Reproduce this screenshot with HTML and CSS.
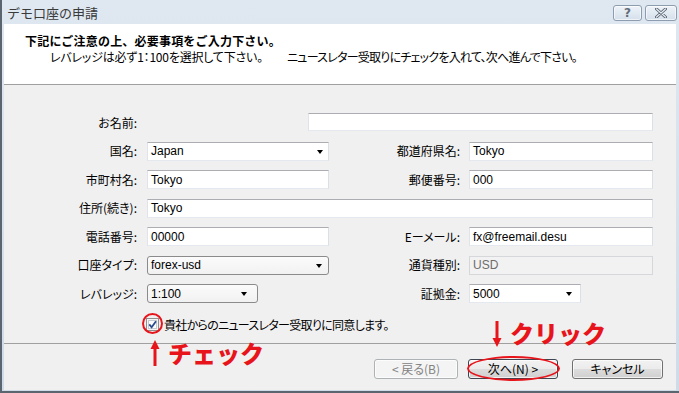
FILE: index.html
```html
<!DOCTYPE html>
<html lang="ja">
<head>
    <meta charset="UTF-8">
    <title>デモ口座の申請</title>
    <link rel="stylesheet" href="styles.css">
</head>
<body>
    <div class="window">
        <div class="titlebar">
            <span class="title">デモ口座の申請</span>
            <div class="caption-btns">
                <span class="cap-btn help">?</span>
                <span class="cap-btn close">
                    <svg width="12" height="10" viewBox="0 0 12 10">
                        <path d="M1.5 1 L10.5 9 M10.5 1 L1.5 9" stroke="#5a6470" stroke-width="3" stroke-linecap="round"/>
                        <path d="M1.5 1 L10.5 9 M10.5 1 L1.5 9" stroke="#e9eef4" stroke-width="1.2" stroke-linecap="round"/>
                    </svg>
                </span>
            </div>
        </div>

        <div class="client">
            <div class="header">
                <p class="header-title">下記にご注意の上、必要事項をご入力下さい。</p>
                <p class="header-sub">
                    <span class="sub-left">レバレッジは必ず1：100を選択して下さい。</span>
                    <span class="sub-right">ニュースレター受取りにチェックを入れて、次へ進んで下さい。</span>
                </p>
            </div>

            <div class="body">
                <div class="form">
                    <label class="lbl">お名前:</label>
                    <div class="field text name"></div>

                    <label class="lbl">国名:</label>
                    <div class="field text combo">Japan<i class="arrow"></i></div>
                    <label class="lbl lbl-r">都道府県名:</label>
                    <div class="field text">Tokyo</div>

                    <label class="lbl">市町村名:</label>
                    <div class="field text">Tokyo</div>
                    <label class="lbl lbl-r">郵便番号:</label>
                    <div class="field text">000</div>

                    <label class="lbl">住所(続き):</label>
                    <div class="field text wide">Tokyo</div>

                    <label class="lbl">電話番号:</label>
                    <div class="field text">00000</div>
                    <label class="lbl lbl-r">Eーメール:</label>
                    <div class="field text">fx@freemail.desu</div>

                    <label class="lbl">口座タイプ:</label>
                    <div class="field list">forex-usd<i class="arrow"></i></div>
                    <label class="lbl lbl-r">通貨種別:</label>
                    <div class="field text disabled">USD</div>

                    <label class="lbl">レバレッジ:</label>
                    <div class="field list short">1:100<i class="arrow"></i></div>
                    <label class="lbl lbl-r">証拠金:</label>
                    <div class="field text combo short">5000<i class="arrow"></i></div>
                </div>

                <div class="agree">
                    <svg class="checkbox" width="13" height="13" viewBox="0 0 13 13">
                        <rect x="0.5" y="0.5" width="12" height="12" fill="#f4f4f4" stroke="#8e8f8f"/>
                        <rect x="2.5" y="2.5" width="8" height="8" fill="#fdfdfd" stroke="#c6cbd2"/>
                        <path d="M3.3 6.4 L5.6 9.2 L10 3.2" fill="none" stroke="#2a4c8f" stroke-width="1.8"/>
                    </svg>
                    <span class="agree-text">貴社からのニュースレター受取りに同意します。</span>
                </div>
            </div>

            <div class="footer">
                <button class="btn disabled back">&lt; 戻る(B)</button>
                <button class="btn default next">次へ(N) &gt;</button>
                <button class="btn cancel">キャンセル</button>
            </div>
        </div>

        <span class="ring ring-check"></span>
        <span class="ring ring-next"></span>

        <div class="note note-check">
            <svg width="10" height="27" viewBox="0 0 10 27">
                <path d="M5 26 V7" stroke="#e8141b" stroke-width="3"/>
                <path d="M0.5 9 L5 0 L9.5 9 Z" fill="#e8141b"/>
            </svg>
            <span>チェック</span>
        </div>
        <div class="note note-click">
            <svg width="10" height="27" viewBox="0 0 10 27">
                <path d="M5 1 V20" stroke="#e8141b" stroke-width="3"/>
                <path d="M0.5 18 L5 27 L9.5 18 Z" fill="#e8141b"/>
            </svg>
            <span>クリック</span>
        </div>
    </div>
</body>
</html>
```

FILE: styles.css
```css
* {
    box-sizing: border-box;
}
body {
    margin: 0;
    width: 679px;
    height: 393px;
    overflow: hidden;
    font-family: "Noto Sans CJK JP", sans-serif;
    font-size: 12px;
    color: #000;
    background: #cfdbe7;
}
p {
    margin: 0;
}
.window {
    position: relative;
    width: 679px;
    height: 393px;
    display: flex;
    flex-direction: column;
    background: linear-gradient(#dfe8f1, #cfdbe7);
    border-left: 2px solid #5b6570;
    border-bottom: 2px solid #5b6570;
}
.titlebar {
    height: 24px;
    display: flex;
    align-items: center;
    justify-content: space-between;
    padding: 0 2px 0 5px;
}
.title {
    font-size: 13px;
    color: #3a3a3a;
    line-height: 1;
}
.caption-btns {
    display: flex;
    gap: 3px;
    align-self: flex-start;
    margin-top: 5px;
}
.cap-btn {
    height: 16px;
    width: 29px;
    display: flex;
    align-items: center;
    justify-content: center;
    border: 1px solid #8d9cae;
    border-radius: 3px;
    background: linear-gradient(#eef3f8, #d5e0eb);
    box-shadow: inset 0 0 0 1px rgba(255,255,255,0.6);
    font-family: "DejaVu Sans", sans-serif;
    font-size: 12px;
    font-weight: bold;
    color: #626c78;
}
.cap-btn.close {
    width: 32px;
}

.client {
    flex: 1;
    margin: 0 3px 1px 2px;
    background: #f0f0f0;
    display: flex;
    flex-direction: column;
}
.header {
    height: 61px;
    background: #fff;
    border-bottom: 1px solid #a0a0a0;
    padding: 9px 0 0 21px;
    line-height: 16px;
}
.header-title {
    font-weight: bold;
    letter-spacing: 0.2px;
}
.header-sub {
    display: flex;
    padding-left: 25px;
    font-feature-settings: "palt";
}
.sub-left {
    width: 237px;
    letter-spacing: -0.2px;
}
.sub-right {
    letter-spacing: -0.75px;
}

.body {
    flex: 1;
    padding-top: 28px;
}
.form {
    display: grid;
    grid-template-columns: 143px 182px 140px 184px;
    grid-auto-rows: 19px;
    row-gap: 9.5px;
}
.lbl {
    align-self: center;
    text-align: right;
    padding-right: 10px;
    line-height: 14px;
    white-space: nowrap;
    font-feature-settings: "palt";
}
.lbl-r {
    padding-right: 9px;
}
.field {
    display: flex;
    align-items: center;
    justify-content: space-between;
    height: 19px;
    padding: 0 5px 0 3px;
    font-family: "Liberation Sans", Arial, sans-serif;
    font-size: 12px;
}
.text {
    background: #fff;
    border: 1px solid;
    border-color: #abadb3 #dbdfe6 #e3e9ef #e2e3ea;
}
.name {
    grid-column: 2 / 5;
    margin-left: 161px;
    height: 18px;
}
.wide {
    grid-column: 2 / 5;
}
.list {
    border: 1px solid #8b8b8b;
    border-radius: 3px;
    background: linear-gradient(#fbfbfb, #f1f1f1);
    padding-right: 6px;
}
.short {
    width: 112px;
}
.list.short {
    width: 111px;
    padding-right: 10px;
}
.combo.short {
    padding-right: 8px;
}
.disabled {
    background: #f2f2f2;
    border-color: #d5d7da;
    color: #6d6d6d;
}
.arrow {
    width: 0;
    height: 0;
    border-left: 3.5px solid transparent;
    border-right: 3.5px solid transparent;
    border-top: 4px solid #000;
    margin-top: 1px;
}

.agree {
    display: flex;
    align-items: center;
    gap: 5px;
    margin: 13px 0 0 142px;
    font-feature-settings: "palt";
}
.agree-text {
    letter-spacing: -0.7px;
}
.checkbox {
    display: block;
}

.footer {
    height: 47px;
    border-top: 1px solid #a0a0a0;
    display: flex;
    justify-content: flex-end;
    padding: 15px 13px 0 0;
}
.btn {
    height: 20px;
    padding: 0;
    border: 1px solid #707070;
    border-radius: 3px;
    background: linear-gradient(#f2f2f2 0%, #ebebeb 50%, #dddddd 50%, #cfcfcf 100%);
    box-shadow: inset 0 0 0 1px rgba(255,255,255,0.7);
    font-family: "Noto Sans CJK JP", sans-serif;
    font-size: 12px;
    line-height: 16px;
    color: #000;
    font-feature-settings: "palt";
}
.back {
    width: 84px;
    margin-right: 10px;
}
.next {
    width: 90px;
    margin-right: 14px;
}
.cancel {
    width: 91px;
}
.btn.disabled {
    border-color: #adb2b5;
    background: #f4f4f4;
    color: #838383;
}
.btn.default {
    border-color: #3c4550;
}

.ring {
    position: absolute;
    border: 2px solid #e8141b;
    border-radius: 50%;
}
.ring-check {
    left: 140px;
    top: 313px;
    width: 21px;
    height: 21px;
}
.ring-next {
    left: 465px;
    top: 356px;
    width: 93px;
    height: 25px;
}
.note {
    position: absolute;
    display: flex;
    align-items: center;
    gap: 8px;
    color: #e8141b;
    font-size: 24px;
    font-weight: 900;
    line-height: 28px;
}
.note svg {
    display: block;
}
.note-check {
    left: 148px;
    top: 339px;
}
.note-click {
    left: 490px;
    top: 319px;
}
```
